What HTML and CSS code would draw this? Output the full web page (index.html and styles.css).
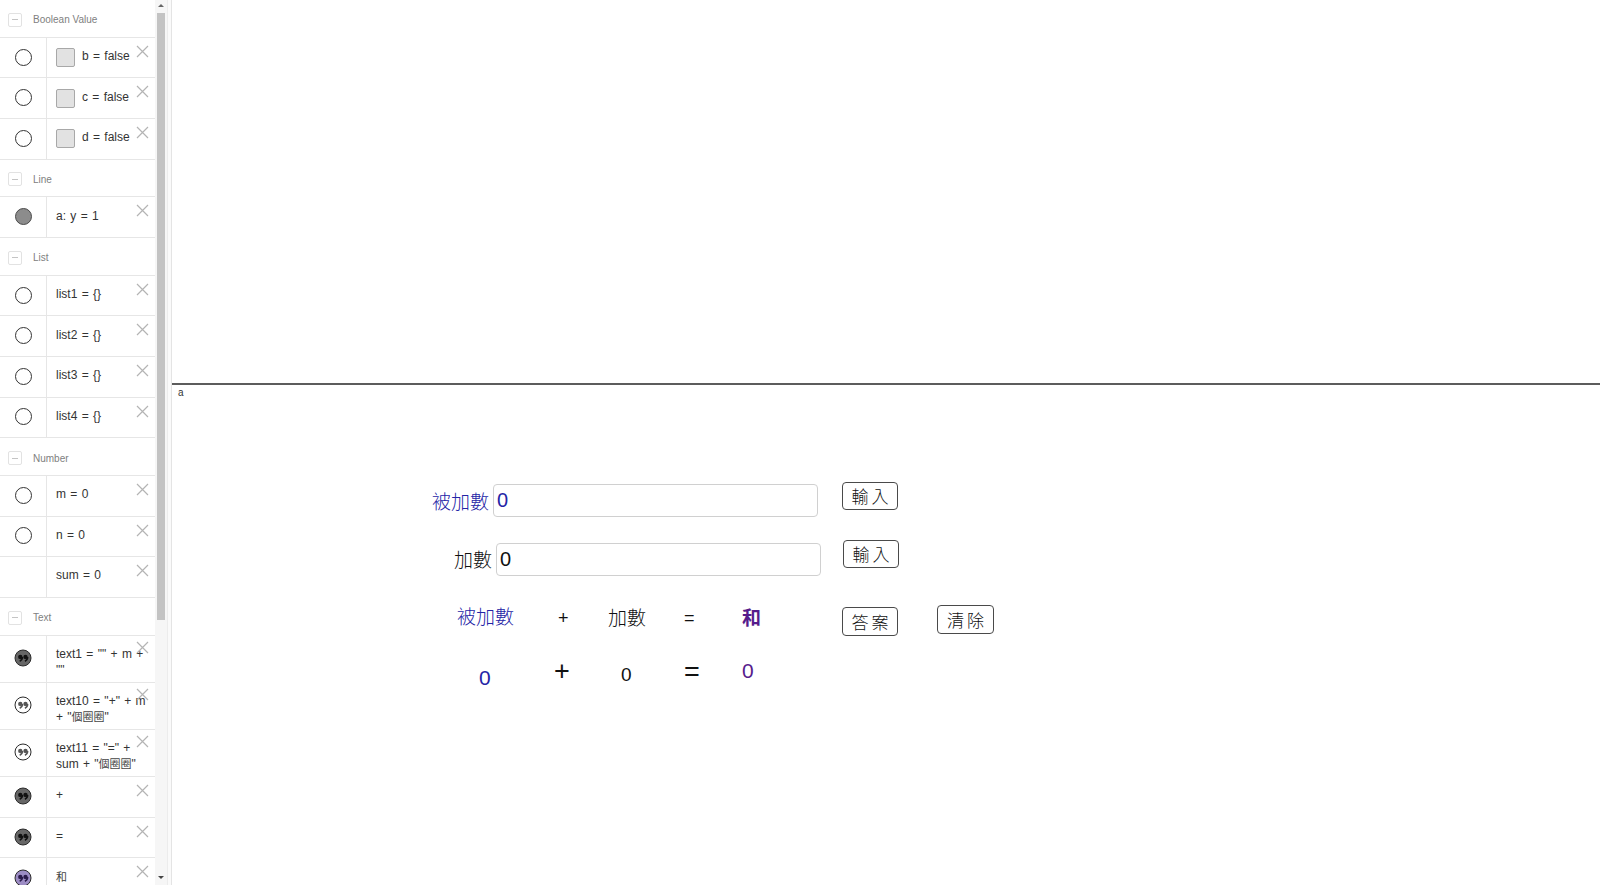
FILE: index.html
```html
<!DOCTYPE html>
<html lang="zh-Hant">
<head>
    <meta charset="UTF-8">
    <title>加法練習</title>
    <link rel="stylesheet" href="styles.css">
</head>
<body>
    <svg class="defs" width="0" height="0">
        <symbol id="quote" viewBox="0 0 18 18">
            <circle cx="6.3" cy="7.9" r="2.2" fill="currentColor"/>
            <circle cx="11.5" cy="7.9" r="2.2" fill="currentColor"/>
            <path d="M8.4 8.1c0 2.1-1.1 3.5-2.7 4.1M13.6 8.1c0 2.1-1.1 3.5-2.7 4.1" stroke="currentColor" stroke-width="1.6" fill="none"/>
        </symbol>
        <symbol id="close" viewBox="0 0 13 13">
            <path d="M1 1l11 11M12 1L1 12" stroke="currentColor" stroke-width="1.2" fill="none"/>
        </symbol>
    </svg>

    <div class="app">
        <aside class="algebra">
            <div class="group-head"><span class="toggle"></span>Boolean Value</div>
            <div class="item">
                <div class="marble-cell"><span class="marble"></span></div>
                <div class="item-body"><span class="checkbox"></span>b = false</div>
                <svg class="close"><use href="#close"/></svg>
            </div>
            <div class="item">
                <div class="marble-cell"><span class="marble"></span></div>
                <div class="item-body"><span class="checkbox"></span>c = false</div>
                <svg class="close"><use href="#close"/></svg>
            </div>
            <div class="item">
                <div class="marble-cell"><span class="marble"></span></div>
                <div class="item-body"><span class="checkbox"></span>d = false</div>
                <svg class="close"><use href="#close"/></svg>
            </div>

            <div class="group-head"><span class="toggle"></span>Line</div>
            <div class="item">
                <div class="marble-cell"><span class="marble filled"></span></div>
                <div class="item-body">a: y = 1</div>
                <svg class="close"><use href="#close"/></svg>
            </div>

            <div class="group-head"><span class="toggle"></span>List</div>
            <div class="item">
                <div class="marble-cell"><span class="marble"></span></div>
                <div class="item-body">list1 = {}</div>
                <svg class="close"><use href="#close"/></svg>
            </div>
            <div class="item">
                <div class="marble-cell"><span class="marble"></span></div>
                <div class="item-body">list2 = {}</div>
                <svg class="close"><use href="#close"/></svg>
            </div>
            <div class="item">
                <div class="marble-cell"><span class="marble"></span></div>
                <div class="item-body">list3 = {}</div>
                <svg class="close"><use href="#close"/></svg>
            </div>
            <div class="item">
                <div class="marble-cell"><span class="marble"></span></div>
                <div class="item-body">list4 = {}</div>
                <svg class="close"><use href="#close"/></svg>
            </div>

            <div class="group-head"><span class="toggle"></span>Number</div>
            <div class="item">
                <div class="marble-cell"><span class="marble"></span></div>
                <div class="item-body">m = 0</div>
                <svg class="close"><use href="#close"/></svg>
            </div>
            <div class="item">
                <div class="marble-cell"><span class="marble"></span></div>
                <div class="item-body">n = 0</div>
                <svg class="close"><use href="#close"/></svg>
            </div>
            <div class="item">
                <div class="marble-cell"></div>
                <div class="item-body">sum = 0</div>
                <svg class="close"><use href="#close"/></svg>
            </div>

            <div class="group-head"><span class="toggle"></span>Text</div>
            <div class="item tall">
                <div class="marble-cell"><svg class="marble-q dark"><circle cx="9" cy="9" r="8"/><use href="#quote"/></svg></div>
                <div class="item-body">text1 = "" + m +<br>""</div>
                <svg class="close"><use href="#close"/></svg>
            </div>
            <div class="item tall">
                <div class="marble-cell"><svg class="marble-q light"><circle cx="9" cy="9" r="8"/><use href="#quote"/></svg></div>
                <div class="item-body">text10 = "+" + m<br>+ "<span class="small-cjk">個圈圈</span>"</div>
                <svg class="close"><use href="#close"/></svg>
            </div>
            <div class="item tall">
                <div class="marble-cell"><svg class="marble-q light"><circle cx="9" cy="9" r="8"/><use href="#quote"/></svg></div>
                <div class="item-body">text11 = "=" +<br>sum + "<span class="small-cjk">個圈圈</span>"</div>
                <svg class="close"><use href="#close"/></svg>
            </div>
            <div class="item">
                <div class="marble-cell"><svg class="marble-q dark"><circle cx="9" cy="9" r="8"/><use href="#quote"/></svg></div>
                <div class="item-body">+</div>
                <svg class="close"><use href="#close"/></svg>
            </div>
            <div class="item">
                <div class="marble-cell"><svg class="marble-q dark"><circle cx="9" cy="9" r="8"/><use href="#quote"/></svg></div>
                <div class="item-body">=</div>
                <svg class="close"><use href="#close"/></svg>
            </div>
            <div class="item">
                <div class="marble-cell"><svg class="marble-q purple"><circle cx="9" cy="9" r="8"/><use href="#quote"/></svg></div>
                <div class="item-body"><span class="small-cjk">和</span></div>
                <svg class="close"><use href="#close"/></svg>
            </div>
        </aside>

        <div class="scrollbar">
            <span class="arrow up"></span>
            <div class="thumb"></div>
            <span class="arrow down"></span>
        </div>
        <div class="splitter"></div>

        <main class="graphics">
            <div class="line-a"></div>
            <span class="line-label">a</span>

            <span class="label blue label-1">被加數</span>
            <div class="input-box input-1"><span class="blue">0</span></div>
            <button class="btn btn-1">輸入</button>

            <span class="label label-2">加數</span>
            <div class="input-box input-2">0</div>
            <button class="btn btn-2">輸入</button>

            <span class="label blue eq-a">被加數</span>
            <span class="op op-plus">+</span>
            <span class="label eq-b">加數</span>
            <span class="op op-eq">=</span>
            <span class="label purple bold eq-sum">和</span>
            <button class="btn btn-answer">答案</button>
            <button class="btn btn-clear">清除</button>

            <span class="num blue val-a">0</span>
            <span class="big-op val-plus">+</span>
            <span class="num val-b">0</span>
            <span class="big-op val-eq">=</span>
            <span class="num purple val-sum">0</span>
        </main>
    </div>
</body>
</html>
```

FILE: styles.css
```css
:root {
    --row-line: #e6e6e6;
    --text-color: #333;
    --blue: #2424a6;
    --purple: #561c8c;
}

body {
    margin: 0;
    font-family: "Liberation Sans", "Noto Sans CJK TC", sans-serif;
    background-color: #fff;
    overflow: hidden;
}

.defs {
    position: absolute;
}

.app {
    display: flex;
    width: 1600px;
    height: 885px;
}

/* algebra view */
.algebra {
    width: 155px;
    flex-shrink: 0;
    height: 885px;
    overflow: hidden;
    color: var(--text-color);
    font-size: 12px;
}

.group-head {
    height: 37.8px;
    box-sizing: border-box;
    border-bottom: 1px solid var(--row-line);
    display: flex;
    align-items: center;
    padding-left: 8px;
    padding-top: 3px;
    font-size: 10px;
    color: #808080;
}

.toggle {
    width: 12px;
    height: 12px;
    border: 1px solid #e2e2e2;
    border-radius: 2px;
    margin-right: 11px;
    position: relative;
}

.toggle::after {
    content: "";
    position: absolute;
    left: 3px;
    top: 5.5px;
    width: 6px;
    height: 1px;
    background-color: #c4c4c4;
}

.item {
    height: 40.6px;
    box-sizing: border-box;
    border-bottom: 1px solid var(--row-line);
    display: flex;
    position: relative;
}

.item.tall {
    height: 47.2px;
}

.marble-cell {
    width: 46px;
    flex-shrink: 0;
    border-right: 1px solid var(--row-line);
    display: flex;
    align-items: center;
    justify-content: center;
    padding-bottom: 1px;
}

.marble {
    width: 15px;
    height: 15px;
    border: 1.2px solid #333;
    border-radius: 50%;
    background-color: #fff;
}

.marble.filled {
    background-color: #8c8c8c;
    border-color: #4a4a4a;
}

.marble-q {
    width: 18px;
    height: 18px;
}

.marble-q circle {
    stroke: #2a2a2a;
    stroke-width: 1;
}

.marble-q use {
    width: 18px;
    height: 18px;
}

.marble-q.dark circle {
    fill: #666;
}

.marble-q.dark {
    color: #111;
}

.marble-q.light circle {
    fill: #fff;
}

.marble-q.light {
    color: #555;
}

.marble-q.purple circle {
    fill: #9c8cc4;
}

.marble-q.purple {
    color: #2a1a4a;
}

.item-body {
    flex: 1;
    display: flex;
    align-items: center;
    padding-left: 9px;
    padding-bottom: 3px;
    white-space: nowrap;
    overflow: hidden;
    line-height: 16px;
    word-spacing: 1px;
}

.item.tall .item-body {
    display: block;
    padding-top: 10px;
}

.small-cjk {
    font-size: 11px;
    color: #444;
}

.checkbox {
    width: 17px;
    height: 17px;
    border: 1px solid #a8a8a8;
    border-radius: 2px;
    background-color: #e2e2e2;
    margin-right: 7px;
    margin-top: 3px;
}

.close {
    position: absolute;
    right: 6px;
    top: 7px;
    width: 13px;
    height: 13px;
    color: #b4b4b4;
}

.item.tall .close {
    top: 5px;
}

/* scrollbar + splitter */
.scrollbar {
    width: 12px;
    flex-shrink: 0;
    background-color: #f6f6f6;
    display: flex;
    flex-direction: column;
    align-items: center;
}

.arrow {
    width: 0;
    height: 0;
    border-left: 3px solid transparent;
    border-right: 3px solid transparent;
}

.arrow.up {
    border-bottom: 3px solid #666;
    margin-top: 4px;
}

.arrow.down {
    border-top: 3px solid #444;
    margin-top: auto;
    margin-bottom: 6px;
}

.thumb {
    width: 8px;
    height: 607px;
    margin-top: 6px;
    background-color: #c3c3c3;
}

.splitter {
    width: 3px;
    flex-shrink: 0;
    background-color: #fafafa;
    border-left: 1px solid #ececec;
    border-right: 1px solid #e4e4e4;
}

/* graphics view */
.graphics {
    flex: 1;
    position: relative;
    overflow: hidden;
    background-color: #fff;
    font-family: "Noto Sans CJK TC", sans-serif;
    color: #111;
}

.line-a {
    position: absolute;
    left: 0;
    right: 0;
    top: 383px;
    height: 2px;
    background-color: #5c5c5c;
}

.line-label {
    position: absolute;
    left: 6px;
    top: 387px;
    font-family: "Liberation Sans", sans-serif;
    font-size: 10px;
    color: #333;
}

.blue {
    color: var(--blue);
}

.purple {
    color: var(--purple);
}

.bold {
    font-weight: bold;
}

.label {
    position: absolute;
    font-size: 19px;
    line-height: 24px;
    font-weight: 300;
}

.label.bold {
    font-weight: bold;
}

.label-1 { left: 260px; top: 489px; }
.label-2 { left: 282px; top: 547px; }
.eq-a { left: 285px; top: 604px; }
.eq-b { left: 436px; top: 605px; }
.eq-sum { left: 570px; top: 605px; }

.input-box {
    position: absolute;
    width: 325px;
    height: 33px;
    box-sizing: border-box;
    border: 1px solid #d0d0d0;
    border-radius: 4px;
    padding-left: 3px;
    font-family: "Liberation Sans", sans-serif;
    font-size: 20px;
    line-height: 31px;
    color: #111;
}

.input-1 { left: 321px; top: 484px; }
.input-2 { left: 324px; top: 543px; }

.btn {
    position: absolute;
    width: 56px;
    height: 28px;
    box-sizing: border-box;
    padding: 0;
    border: 1px solid #4a4a4a;
    border-radius: 4px;
    background-color: #fff;
    font-family: "Noto Sans CJK TC", sans-serif;
    font-size: 17px;
    font-weight: 300;
    line-height: 24px;
    letter-spacing: 3px;
    text-indent: 3px;
    color: #111;
}

.btn-1 { left: 670px; top: 482px; }
.btn-2 { left: 671px; top: 540px; }
.btn-answer { left: 670px; top: 607px; height: 29px; }
.btn-clear { left: 765px; top: 605px; height: 29px; width: 57px; }

.op {
    position: absolute;
    font-family: "Liberation Sans", sans-serif;
    font-size: 18px;
    line-height: 24px;
}

.op-plus { left: 386px; top: 606px; }
.op-eq { left: 512px; top: 606px; }

.num,
.big-op {
    position: absolute;
    font-family: "Liberation Sans", sans-serif;
    line-height: 28px;
}

.num {
    font-size: 21px;
}

.big-op {
    font-size: 27px;
}

.val-a { left: 307px; top: 664px; }
.val-plus { left: 382px; top: 657px; }
.val-b { left: 449px; top: 661px; font-size: 19px; }
.val-eq { left: 512px; top: 658px; }
.val-sum { left: 570px; top: 657px; }
```
